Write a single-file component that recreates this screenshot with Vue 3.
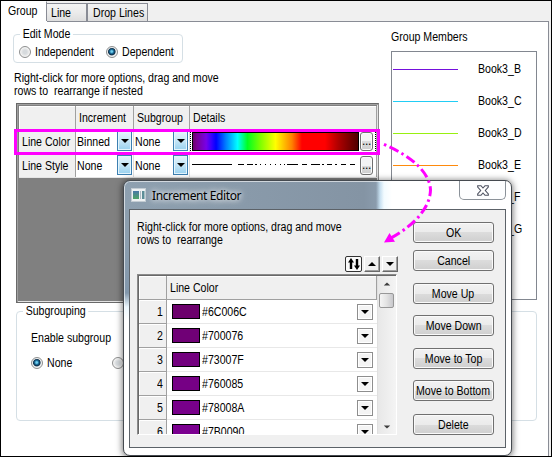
<script setup>
const members = [
  { name: 'Book3_B', color: '#7410dc' },
  { name: 'Book3_C', color: '#22cdf5' },
  { name: 'Book3_D', color: '#98f010' },
  { name: 'Book3_E', color: '#ff8a0c' },
  { name: 'Book3_F', color: 'transparent' },
  { name: 'Book3_G', color: 'transparent' },
]
const increments = ['#6C006C', '#700076', '#73007F', '#760085', '#78008A', '#7B0090']
const actions = [
  { label: 'OK', gap: 0 },
  { label: 'Cancel', gap: 7 },
  { label: 'Move Up', gap: 12 },
  { label: 'Move Down', gap: 11 },
  { label: 'Move to Top', gap: 12 },
  { label: 'Move to Bottom', gap: 11 },
  { label: 'Delete', gap: 13 },
]
</script>

<template>
  <div class="window">
    <nav class="tabs">
      <div class="tab active"><span class="t">Group</span></div>
      <div class="tab line"><span class="t">Line</span></div>
      <div class="tab drop"><span class="t">Drop Lines</span></div>
    </nav>

    <main class="panel">
      <div class="upper">
        <section class="left">
          <div class="group edit-mode">
            <div class="legend"><span class="t">Edit Mode</span></div>
            <div class="options">
              <i class="radio"></i><span class="t ind">Independent</span>
              <i class="radio on"></i><span class="t">Dependent</span>
            </div>
          </div>
          <p class="hint">
            <span class="t">Right-click for more options, drag and move</span>
            <span class="t">rows to&nbsp; rearrange if nested</span>
          </p>
          <div class="grid">
            <div class="row head">
              <div class="cell"></div>
              <div class="cell"><span class="t">Increment</span></div>
              <div class="cell"><span class="t">Subgroup</span></div>
              <div class="cell"><span class="t">Details</span></div>
            </div>
            <div class="row">
              <div class="cell name"><span class="t">Line Color</span></div>
              <div class="cell"><span class="t">Binned</span><b class="drop-btn"></b></div>
              <div class="cell"><span class="t">None</span><b class="drop-btn"></b></div>
              <div class="cell details focus"><div class="spectrum"></div><b class="more">...</b></div>
            </div>
            <div class="row">
              <div class="cell name"><span class="t">Line Style</span></div>
              <div class="cell"><span class="t">None</span><b class="drop-btn"></b></div>
              <div class="cell"><span class="t">None</span><b class="drop-btn"></b></div>
              <div class="cell details">
                <svg class="styles" width="167" height="19"><path d="M0 8.5H40M46 8.5h6M55 8.5h6M63 8.5h2M68 8.5h1M73 8.5h1M78 8.5h1M83 8.5h1M88 8.5h1M92 8.5h1M95 8.5h11M110 8.5h5M119 8.5h9M130 8.5h2M135 8.5h5M143 8.5h2M149 8.5h5M158 8.5h5" stroke="#000" /></svg>
                <b class="more">...</b>
              </div>
            </div>
          </div>
        </section>

        <section class="members">
          <span class="t">Group Members</span>
          <div class="list">
            <div v-for="m in members" :key="m.name" class="member">
              <i class="sample" :style="{ background: m.color }"></i><span class="t">{{ m.name }}</span>
            </div>
          </div>
        </section>
      </div>

      <div class="group subgrouping">
        <div class="legend"><span class="t">Subgrouping</span></div>
        <div class="enable"><span class="t">Enable subgroup</span></div>
        <div class="options">
          <i class="radio on"></i><span class="t none">None</span><i class="radio"></i>
        </div>
      </div>
    </main>

    <div class="highlight"></div>

    <div class="dialog">
      <header class="title">
        <svg class="app-icon" width="15" height="14" viewBox="0 0 15 14">
          <defs><linearGradient id="ic" x2="0" y2="1"><stop offset="0" stop-color="#4a78a8" /><stop offset="1" stop-color="#4fa565" /></linearGradient></defs>
          <rect x=".5" y=".5" width="14" height="13" fill="#eef1f3" stroke="#c3ccd3" />
          <rect x="2" y="3" width="6" height="8" fill="url(#ic)" />
          <rect x="9" y="3" width="1" height="8" fill="#aebac2" />
          <rect x="11" y="3" width="2.5" height="8" fill="#5d8e98" />
        </svg>
        <span class="caption">Increment Editor</span>
        <div class="close">
          <svg width="12" height="11" viewBox="0 0 12 11"><path d="M.7.7H4L6 3 8 .7h3.300v1.300L8.300 5.500l3 3.500v1.300H8L6 8 4 10.300H.7V9l3-3.500L.7 2z" fill="#fff" stroke="#4c5160" stroke-width="1.100" /></svg>
        </div>
      </header>
      <div class="client">
        <section class="editor">
          <p class="hint">
            <span class="t">Right-click for more options, drag and move</span>
            <span class="t">rows to&nbsp; rearrange</span>
          </p>
          <div class="tools">
            <b class="tool sort"><svg width="14" height="14" viewBox="0 0 14 14"><path d="M4 1L7 5.500H5.200V12H2.800V5.500H1zM10 13L13 8.500H11.200V2H8.800V8.500H7z" /></svg></b>
            <b class="tool"><i class="tri up"></i></b>
            <b class="tool"><i class="tri"></i></b>
          </div>
          <div class="table">
            <div class="rows">
              <div class="trow thead"><div class="num"></div><div class="val"><span class="t">Line Color</span></div></div>
              <div v-for="(c, i) in increments" :key="c" class="trow">
                <div class="num"><span class="t">{{ i + 1 }}</span></div>
                <div class="val">
                  <i class="swatch" :style="{ background: c }"></i><span class="t">{{ c }}</span>
                  <b class="pick"><i class="tri"></i></b>
                </div>
              </div>
            </div>
            <div class="scroll"><i class="tri up"></i><div class="thumb"></div><i class="tri end"></i></div>
          </div>
        </section>
        <aside class="actions">
          <button v-for="a in actions" :key="a.label" :style="{ marginTop: a.gap + 'px' }"><span class="t">{{ a.label }}</span></button>
        </aside>
      </div>
    </div>

    <svg class="arrow" width="552" height="457" viewBox="0 0 552 457">
      <path d="M383 144C414 157 430 174 430.500 190C430 207 416 224 391 238" fill="none" stroke="#f0f" stroke-width="3" stroke-dasharray="2.500 3.500 10 3.500" stroke-dashoffset="-1" />
      <path d="M384 242.500L389.500 233L395 241.800z" fill="#f0f" />
    </svg>
  </div>
</template>

<style>
body { margin: 0; overflow: hidden; }
</style>

<style scoped>
* { box-sizing: border-box; }
.window {
  position: relative; width: 552px; height: 457px; overflow: hidden;
  border: 1px solid #000; background: #f0f0f0; color: #000;
  font: 12px/14px "Liberation Sans", Arial, sans-serif; white-space: nowrap;
}
.t { display: inline-block; transform: scaleX(.882); transform-origin: 0 50%; }
.tabs { display: flex; align-items: flex-end; height: 20px; }
.tab { height: 18px; border: 1px solid #898c95; border-bottom: 0; background: linear-gradient(#f3f3f3, #ebebeb 50%, #dedede); padding: 2px 0 0 4px; }
.tab.active { width: 46px; height: 20px; background: #fff; border-top-color: #fff; border-left: 0; padding: 2px 0 0 7px; }
.tab.line { width: 40px; border-left: 0; }
.tab.drop { width: 61px; padding-left: 5px; }
.panel { width: 548px; height: 435px; border-right: 1px solid #898c95; background: linear-gradient(#898c95, #898c95) 46px 0 / 502px 1px no-repeat #fff; }
.upper { display: flex; height: 282px; }
.left { width: 378px; padding: 13px 0 0 12px; }
.group { position: relative; border: 1px solid #d5dfe5; border-radius: 4px; }
.legend { height: 14px; margin-top: -8px; }
.legend .t { background: #fff; padding: 0 3px; }
.edit-mode { width: 170px; height: 29px; }
.edit-mode .legend { padding-left: 6px; }
.options { display: flex; align-items: center; height: 14px; }
.edit-mode .options { margin-top: 4px; padding-left: 5px; }
.radio { width: 12px; height: 12px; border-radius: 50%; border: 1px solid #8e8f8f; background: radial-gradient(circle, #d6dadd 0 25%, #eee 60%); box-shadow: inset 0 0 0 1px #f4f4f4; margin-right: 4px; flex: none; }
.radio.on { background: radial-gradient(circle at 47% 45%, #70d0f0 0 10%, #1c6f9c 26%, #0b2b45 44%, #e8ecee 58%); }
.ind { width: 71px; }
.hint { margin: 0; line-height: 13px; }
.hint .t { display: block; height: 13px; }
.left .hint { padding: 9px 0 9px 1px; height: 41px; }
.grid { width: 363px; height: 200px; margin: -1px 0 0 3px; border: 1px solid #696969; border-right-color: #8a8a8a; background: #808080; padding: 2px 1px 0 2px; box-shadow: inset 1px 1px #a0a0a0, inset -1px -1px #e3e3e3; }
.row { display: grid; grid-template-columns: 57px 58px 56px 1fr; height: 24px; background: #fff; border-bottom: 1px solid #e4e4e4; }
.row.head { height: 24px; background: #f0f0f0; border-bottom: 1px solid #a0a0a0; box-shadow: inset 1px 1px #fff; }
.cell { display: flex; align-items: center; justify-content: space-between; border-right: 1px solid #dedede; padding: 0 1px 1px 1px; }
.cell > .t { margin-top: 1px; }
.head .cell { border-color: #a0a0a0; padding-left: 3px; }
.name { background: #f0f0f0; border-color: #a0a0a0; padding-left: 3px; }
.row:not(.head) .name .t { width: 50px; }
.drop-btn { display: flex; align-items: center; justify-content: center; width: 15px; height: 20px; border: 1px solid #3c7fb1; background: linear-gradient(#e5f4fc, #c4e5f6 50%, #98d1ef); box-shadow: inset 0 0 0 1px #e4f5fd; flex: none; margin-left: -8px; }
.drop-btn::before, .tri { content: ""; border: 4px solid transparent; border-top-color: #000; border-bottom: 0; }
.tri.up { border-top: 0; border-bottom: 4px solid #000; }
.details { padding: 1px 3px 1px 2px; border-right: 1px solid #a0a0a0; justify-content: flex-start; }
.focus { background: repeating-linear-gradient(#000 0 1px, #fff 1px 2px) 0 0 / 1px 100% no-repeat, repeating-linear-gradient(#000 0 1px, #fff 1px 2px) 100% 0 / 1px 100% no-repeat; }
.spectrum { width: 167px; height: 19px; border: 1px solid #000; background: linear-gradient(90deg, #6c006c, #7b0090 2%, #7800e8 8%, #3c00ff 11%, #0000ff 14%, #0080ff 20%, #00ffff 27%, #00ff20 33%, #80ff00 41%, #ffff00 50%, #ff8000 60%, #ff0000 66%, #ff0000 80%, #b00000 88%, #500000 100%); }
.more { width: 13px; height: 19px; margin-left: 1px; border: 1px solid #707070; border-radius: 3px; background: linear-gradient(#f3f3f3 50%, #dcdcdc 50%, #cecece); box-shadow: inset 0 0 0 1px #fafafa; font-weight: 400; line-height: 17px; text-align: center; letter-spacing: -.3px; }
.members { padding: 9px 0 0 12px; }
.members > .t { display: block; height: 21px; }
.list { width: 146px; height: 249px; border: 1px solid #828790; padding: 1px 0 0 1px; }
.member { display: flex; align-items: center; height: 32px; }
.sample { width: 65px; height: 1px; margin-right: 20px; }
.subgrouping { width: 521px; height: 110px; margin: 8px 0 0 15px; }
.subgrouping .legend { padding-left: 6px; }
.subgrouping .enable { padding: 13px 0 0 14px; }
.subgrouping .options { padding-left: 14px; margin-top: 11px; }
.subgrouping .none { width: 65px; }
.highlight { position: absolute; left: 13px; top: 128px; width: 366px; height: 26px; border: 3px solid #f0f; }
.dialog {
  position: absolute; left: 122px; top: 179px; width: 389px; height: 276px;
  border: 1px solid #454a50; border-radius: 7px; padding: 0 5px 7px 5px;
  background: linear-gradient(90deg, #8ea0b0, #8494a4 240px, #8a9bac 252px, #c6dff0 256px, #f2fbff 260px, #fff 268px) 0 0 / 100% 29px no-repeat, linear-gradient(#8c9eae 60px, #8297ab 112px, #eaf6fd 126px, #fff 140px) 0 0 / 7px 100% no-repeat, #fff;
  box-shadow: inset 0 0 0 1px rgba(255,255,255,.6), 0 1px 6px 1px rgba(0,0,0,.5);
}
.title { display: flex; height: 28px; padding: 7px 0 0 2px; }
.caption { margin: -1px 0 0 6px; font: 12px/17px "Noto Sans", "Open Sans", sans-serif; letter-spacing: -.38px; text-shadow: 0 0 5px #fff, 0 0 8px #fff; }
.close { display: flex; align-items: center; justify-content: center; width: 47px; height: 19px; margin: -7px 0 0 auto; border: 1px solid #8b9299; border-top: 0; border-radius: 0 0 5px 5px; background: #fdfeff; }
.client { display: flex; height: 239px; border: 1px solid #5c6268; background: #f0f0f0; }
.editor { width: 283px; padding: 11px 0 0 7px; }
.editor .hint { height: 35px; }
.tools { display: flex; height: 18px; padding-left: 208px; gap: 2px; }
.tool { display: flex; align-items: center; justify-content: center; width: 16px; height: 16px; border: 1px solid #fff; border-right-color: #696969; border-bottom-color: #696969; box-shadow: inset -1px -1px #a0a0a0; }
.tool.sort { border: 1px solid #333; border-radius: 2px; box-shadow: none; background: #fafafa; width: 17px; }
.table { display: flex; width: 260px; height: 161px; overflow: hidden; border: 1px solid #a0a0a0; border-color: #8b8b8b #fff #fff #8b8b8b; padding: 1px 0 0 1px; box-shadow: inset 1px 1px #696969; }
.rows { width: 239px; overflow: hidden; border-right: 1px solid #e0e0e0; }
.trow { display: flex; height: 24px; background: #fff; border-bottom: 1px solid #e8e8e8; }
.num { display: flex; align-items: center; justify-content: flex-end; width: 28px; background: #f0f0f0; border-right: 1px solid #a0a0a0; border-bottom: 1px solid #a0a0a0; margin-bottom: -1px; padding-right: 2px; box-shadow: inset 1px 1px #fff; }
.val { display: flex; align-items: center; flex: 1; padding: 0 4px 0 5px; }
.thead { background: #f0f0f0; border-color: #a0a0a0; box-shadow: inset 0 1px #fff; }
.thead .val { padding-left: 3px; border-right: 1px solid #a0a0a0; }
.swatch { width: 28px; height: 15px; border: 1px solid #000; margin-right: 2px; }
.pick { display: flex; align-items: center; justify-content: center; width: 16px; height: 16px; margin-left: auto; border: 1px solid #8e8e8e; background: #f4f4f4; box-shadow: inset 0 0 0 1px #fff; }
.scroll { display: flex; flex-direction: column; align-items: center; flex: 1; padding: 6px 2px 5px 1px; background: linear-gradient(90deg, #e8e8e8, #f4f4f4); }
.scroll .tri { transform: scale(.8); opacity: .75; }
.thumb { width: 15px; height: 15px; margin-top: 7px; border: 1px solid #979797; border-radius: 2px; background: linear-gradient(90deg, #f5f5f5, #e3e3e3 50%, #c8c8cc); }
.end { margin-top: auto; }
.actions { display: flex; flex-direction: column; padding-top: 12px; }
button { display: flex; align-items: center; justify-content: center; width: 81px; height: 21px; padding: 0; border: 1px solid #707070; border-radius: 3px; background: linear-gradient(#f2f2f2, #ebebeb 50%, #dcdcdc 50%, #cfcfcf); box-shadow: inset 0 0 0 1px #fafafa; font: inherit; color: #000; }
button .t { transform-origin: 50% 50%; margin: 0 -5px; }
.arrow { position: absolute; left: -1px; top: -1px; pointer-events: none; }
</style>
